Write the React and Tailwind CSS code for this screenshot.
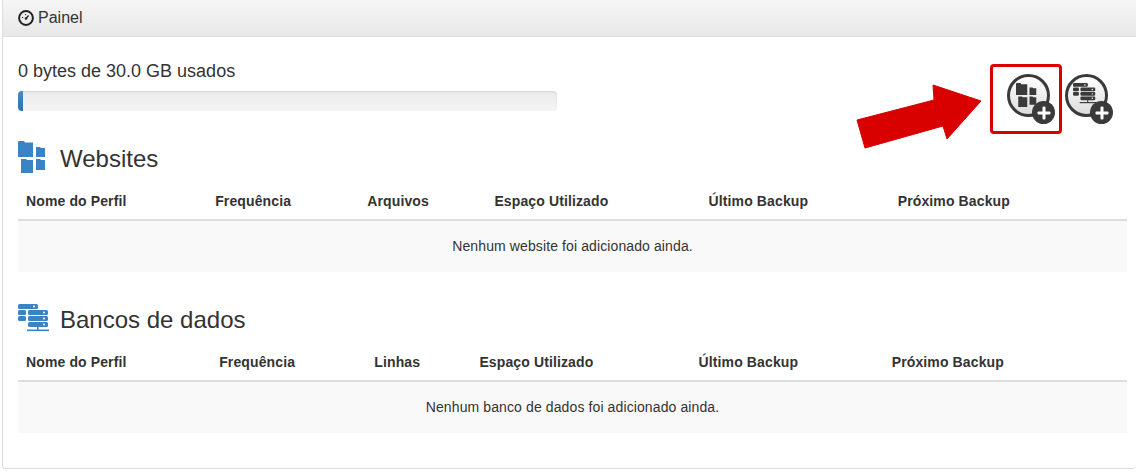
const websiteCols = [
  ['Nome do Perfil', 'w-[189px]'],
  ['Frequência', 'w-[152px]'],
  ['Arquivos', 'w-[127px]'],
  ['Espaço Utilizado', 'w-[214px]'],
  ['Último Backup', 'w-[189px]'],
  ['Próximo Backup', 'w-[237px]'],
];

const databaseCols = [
  ['Nome do Perfil', 'w-[193px]'],
  ['Frequência', 'w-[155px]'],
  ['Linhas', 'w-[105px]'],
  ['Espaço Utilizado', 'w-[219px]'],
  ['Último Backup', 'w-[193px]'],
  ['Próximo Backup', 'w-[243px]'],
];

function GaugeIcon() {
  return (
    <svg width="16" height="16" viewBox="0 0 16 16" fill="none" className="shrink-0">
      <circle cx="8" cy="8" r="6.9" stroke="#222" strokeWidth="2" />
      <circle cx="8" cy="8.5" r="1.3" fill="#222" />
      <path d="M8 8.5 L10.6 5.5" stroke="#222" strokeWidth="1.2" />
      <path d="M4 7.5h1.2M7.6 4v1.2" stroke="#222" strokeWidth="1" />
    </svg>
  );
}

function WebsitesGlyph({ size = 28, color = '#3a83c5' }) {
  return (
    <svg width={size} height={size * 32 / 28} viewBox="0 0 28 32" fill={color}>
      <path d="M0 1 Q0 0 1 0 H6 L7 1.5 H15 V16 H0 Z" />
      <path d="M18 6 H22 L23 7 H27 V16 H18 Z" />
      <path d="M3 18 H8 L9 19 H15 V32 H3 Z" />
      <path d="M18 18 H22 L23 19 H27 V29 H18 Z" />
    </svg>
  );
}

function DatabaseGlyph({ width = 31, height = 28, color = '#3a83c5' }) {
  return (
    <svg width={width} height={height} viewBox="0 0 31 28">
      <g fill={color}>
        <rect x="0" y="0" width="20" height="5" rx="1.5" />
        <rect x="0" y="6" width="8" height="5" rx="1.5" />
        <rect x="10" y="6" width="20" height="5" rx="1.5" />
        <rect x="0" y="12" width="8" height="5" rx="1.5" />
        <rect x="10" y="12" width="20" height="5" rx="1.5" />
        <rect x="10" y="18" width="20" height="5" rx="1.5" />
        <rect x="9" y="25.5" width="22" height="1.6" />
        <rect x="19" y="23" width="1.6" height="3" />
      </g>
      <g fill="#fff">
        <circle cx="16" cy="2.5" r="1" />
        <circle cx="26" cy="8.5" r="1" />
        <circle cx="26" cy="14.5" r="1" />
        <circle cx="26" cy="20.5" r="1" />
      </g>
    </svg>
  );
}

function AddButton({ children }) {
  return (
    <div className="relative w-[43px] h-[43px] rounded-full border-[3px] border-[#3a3a3a] bg-gradient-to-b from-[#ffffff] to-[#dcdcdc] flex items-center justify-center">
      {children}
      <span className="absolute left-[22px] top-[24px] w-[23px] h-[23px] rounded-full bg-[#3a3a3a] flex items-center justify-center">
        <svg width="14" height="14" viewBox="0 0 14 14" fill="#fff">
          <rect x="5.5" y="0.5" width="3" height="13" rx="1" />
          <rect x="0.5" y="5.5" width="13" height="3" rx="1" />
        </svg>
      </span>
    </div>
  );
}

function SectionTable({ cols, emptyText }) {
  return (
    <table className="w-full table-fixed border-collapse">
      <thead>
        <tr className="border-b-2 border-[#dddddd]">
          {cols.map(([label, width]) => (
            <th key={label} className={`${width} h-[37px] px-2 text-left align-middle text-[14px] font-bold tracking-[0.12px] text-[#333333]`}>
              {label}
            </th>
          ))}
        </tr>
      </thead>
      <tbody>
        <tr className="bg-[#f9f9f9]">
          <td colSpan={6} className="h-[52px] text-center align-middle text-[14px] tracking-[0.11px] text-[#333333]">
            {emptyText}
          </td>
        </tr>
      </tbody>
    </table>
  );
}

export default function App() {
  return (
    <div className="relative h-[472px] w-[1136px] overflow-hidden bg-white pl-[2px] pb-[3px] font-['Liberation_Sans',Arial,sans-serif] text-[#333333]">
      <div className="h-full rounded-b border border-t-0 border-r-0 border-[#dddddd]">
        <div className="flex h-[37px] items-center gap-[4px] border-b border-[#dddddd] bg-gradient-to-b from-[#f5f5f5] to-[#e8e8e8] pl-[15px] text-[16px]">
          <GaugeIcon />
          <span>Painel</span>
        </div>

        <div className="pl-[15px] pr-[9px]">
          <div className="flex justify-between pt-[24px]">
            <div className="w-[539px]">
              <p className="text-[18px] leading-[20px]">0 bytes de 30.0 GB usados</p>
              <div className="mt-[10px] h-[20px] overflow-hidden rounded bg-gradient-to-b from-[#ebebeb] to-[#f5f5f5] shadow-[inset_0_1px_2px_rgba(0,0,0,0.1)]">
                <div className="h-full w-[5px] bg-gradient-to-b from-[#428bca] to-[#3071a9]" />
              </div>
            </div>
            <div className="flex gap-[15px] pr-[19px] pt-[13px]">
              <AddButton>
                <span className="-translate-x-[2px] -translate-y-[1px]">
                  <WebsitesGlyph size={21} color="#3a3a3a" />
                </span>
              </AddButton>
              <AddButton>
                <span className="-translate-x-[2px] -translate-y-[2px]">
                  <DatabaseGlyph width={23} height={21} color="#3a3a3a" />
                </span>
              </AddButton>
            </div>
          </div>

          <div className="mt-[23px] flex h-[37px] items-center gap-[14px]">
            <span className="-translate-y-[2px]">
              <WebsitesGlyph />
            </span>
            <h2 className="text-[24px] font-normal">Websites</h2>
          </div>
          <div className="mt-[6px]">
            <SectionTable cols={websiteCols} emptyText="Nenhum website foi adicionado ainda." />
          </div>

          <div className="mt-[29px] flex h-[37px] items-center gap-[11px]">
            <span className="-translate-y-[2px]">
              <DatabaseGlyph />
            </span>
            <h2 className="text-[24px] font-normal">Bancos de dados</h2>
          </div>
          <div className="mt-[6px]">
            <SectionTable cols={databaseCols} emptyText="Nenhum banco de dados foi adicionado ainda." />
          </div>
        </div>
      </div>

      {/* annotation drawn on top of the screenshot */}
      <div className="absolute left-[990px] top-[64px] h-[70px] w-[72px] rounded-sm border-[3px] border-[#d90000]" />
      <svg className="absolute left-[850px] top-[80px]" width="140" height="75" viewBox="0 0 140 75">
        <polygon points="7,40 84,20 83,5 131,21 97,59 93,46 15,68" fill="#d90000" stroke="#d90000" strokeWidth="1" strokeLinejoin="round" />
      </svg>
    </div>
  );
}
